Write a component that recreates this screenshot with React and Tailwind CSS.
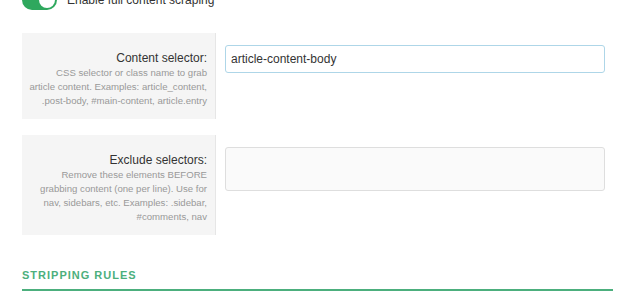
import React, { useState } from 'react';

const rows = [
  {
    label: 'Content selector:',
    help: 'CSS selector or class name to grab article content. Examples: article_content, .post-body, #main-content, article.entry',
    kind: 'input',
    value: 'article-content-body',
  },
  {
    label: 'Exclude selectors:',
    help: 'Remove these elements BEFORE grabbing content (one per line). Use for nav, sidebars, etc. Examples: .sidebar, #comments, nav',
    kind: 'textarea',
    value: '',
  },
];

const Toggle = ({ on }) => (
  <div className={`relative shrink-0 w-[35px] h-[20px] rounded-full ${on ? 'bg-[#2fa85e]' : 'bg-gray-300'}`}>
    <div className="absolute top-[2px] right-[2px] w-[16px] h-[16px] rounded-full bg-white" />
  </div>
);

const App = () => {
  const [selector, setSelector] = useState(rows[0].value);
  const [exclude, setExclude] = useState('');

  return (
    <div className="w-[635px] h-[300px] overflow-hidden bg-white text-[#333] font-['Liberation_Sans',Arial,sans-serif]">
      <div className="px-[22px] -mt-[10px]">
        {/* toggle, partly scrolled off */}
        <div className="flex items-center gap-[10px] h-[20px]">
          <Toggle on />
          <span className="text-[12px] leading-[16px]">Enable full content scraping</span>
        </div>

        <div className="mt-[23px] flex flex-col gap-[16px]">
          {rows.map((row) => (
            <div key={row.label} className="flex">
              <div className="w-[194px] shrink-0 bg-[#f5f5f5] border-r border-[#e6e6e6] pt-[18px] pb-[11px] pr-[8px] pl-[6px] text-right">
                <div className="text-[12px] leading-[15px] text-[#333]">{row.label}</div>
                <div className="text-[9.6px] leading-[14px] text-[#999]">{row.help}</div>
              </div>
              <div className="flex-1 pt-[12px] pl-[9px] pr-[8px]">
                {row.kind === 'input' ? (
                  <input
                    className="w-full h-[28px] px-[5px] text-[12px] text-[#333] border border-[#aed6e8] rounded-[3px] outline-none bg-white"
                    value={selector}
                    onChange={(e) => setSelector(e.target.value)}
                  />
                ) : (
                  <textarea
                    className="block w-full h-[44px] px-[5px] py-[4px] text-[12px] border border-[#dedede] rounded-[3px] outline-none bg-[#fafafa] resize-none"
                    value={exclude}
                    onChange={(e) => setExclude(e.target.value)}
                  />
                )}
              </div>
            </div>
          ))}
        </div>

        <div className="mt-[33px] pb-[7px] border-b-2 border-[#4caf7d]">
          <h3 className="text-[11px] font-bold tracking-[1px] text-[#4caf7d] leading-[14px]">STRIPPING RULES</h3>
        </div>
      </div>
    </div>
  );
};

export default App;
